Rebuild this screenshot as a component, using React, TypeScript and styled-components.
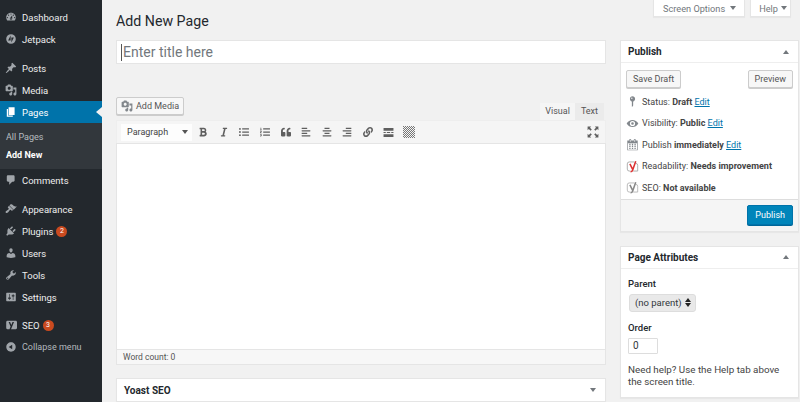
import React from 'react'
import styled, {createGlobalStyle} from 'styled-components'
import {
  FaBold,
  FaItalic,
  FaListUl,
  FaListOl,
  FaQuoteLeft,
  FaAlignLeft,
  FaAlignCenter,
  FaAlignRight,
  FaLink,
} from 'react-icons/fa'

const icons = {
  dashboard:
    'M3.76 16h12.48c1.1-1.37 1.76-3.11 1.76-5 0-4.42-3.58-8-8-8s-8 3.58-8 8c0 1.89.66 3.63 1.76 5zM10 4c.55 0 1 .45 1 1s-.45 1-1 1-1-.45-1-1 .45-1 1-1zM6 6c.55 0 1 .45 1 1s-.45 1-1 1-1-.45-1-1 .45-1 1-1zm8 0c.55 0 1 .45 1 1s-.45 1-1 1-1-.45-1-1 .45-1 1-1zm-5.37 5.55L12 7v6c0 1.1-.9 2-2 2s-2-.9-2-2c0-.57.24-1.08.63-1.45zM4 10c.55 0 1 .45 1 1s-.45 1-1 1-1-.45-1-1 .45-1 1-1zm12 0c.55 0 1 .45 1 1s-.45 1-1 1-1-.45-1-1 .45-1 1-1zm-5 3c0-.55-.45-1-1-1s-1 .45-1 1 .45 1 1 1 1-.45 1-1z',
  jetpack:
    'M10 2a8 8 0 1 0 0 16 8 8 0 0 0 0-16zM9.4 4v8.6H5.2L9.4 4zm1.2 12v-8.6h4.2L10.6 16z',
  pin: 'M10.44 3.02l1.82-1.82 6.36 6.35-1.83 1.82c-1.05-.68-2.48-.57-3.41.36l-.75.75c-.92.93-1.04 2.35-.35 3.41l-1.83 1.82-2.41-2.41-2.8 2.79c-.42.42-3.38 2.71-3.8 2.29s1.86-3.39 2.28-3.81l2.79-2.79L4.1 9.36l1.83-1.82c1.05.69 2.48.57 3.4-.36l.75-.75c.93-.92 1.05-2.35.36-3.41z',
  media:
    'M13 11V4c0-.55-.45-1-1-1h-1.67L9 1H5L3.67 3H2c-.55 0-1 .45-1 1v7c0 .55.45 1 1 1h10c.55 0 1-.45 1-1zM7 4.5c1.38 0 2.5 1.12 2.5 2.5S8.38 9.5 7 9.5 4.5 8.38 4.5 7 5.62 4.5 7 4.5zM14 6h5v10.5c0 1.38-1.12 2.5-2.5 2.5S14 17.88 14 16.5s1.12-2.5 2.5-2.5c.17 0 .34.02.5.05V9h-3V6zm-4 8.05V13h2v3.5c0 1.38-1.12 2.5-2.5 2.5S7 17.88 7 16.5 8.12 14 9.5 14c.17 0 .34.02.5.05z',
  pages: 'M6 15V2h10v13H6zm-1 1h8v2H3V5h2v11z',
  comments:
    'M5 2h9c1.1 0 2 .9 2 2v7c0 1.1-.9 2-2 2h-2l-5 5v-5H5c-1.1 0-2-.9-2-2V4c0-1.1.9-2 2-2z',
  appearance:
    'M14.48 11.06L7.41 3.99l1.5-1.5c.5-.56 2.3-.47 3.51.32 1.21.8 1.43 1.28 2.91 2.1 1.18.64 2.45 1.26 4.45.85zm-.71.71L6.7 4.7 4.93 6.47c-.39.39-.39 1.02 0 1.41l1.06 1.06c.39.39.39 1.03 0 1.42-.6.6-1.43 1.11-2.21 1.69-.35.26-.7.53-1.01.84C1.43 13.23.4 15.13 1.4 16.13c1 1 3.01.06 4.35-1.28.31-.31.58-.66.84-1.01.58-.78 1.09-1.61 1.69-2.21.39-.39 1.03-.39 1.42 0l1.06 1.06c.39.39 1.02.39 1.41 0z',
  plugins:
    'M13.11 4.36L9.87 7.6 8 5.73l3.24-3.24c.35-.34 1.05-.2 1.56.32.52.51.66 1.21.31 1.55zm-8 1.77l.91-1.12 9.01 9.01-1.19.84c-.71.71-2.63 1.16-3.82 1.16H6.14L4.9 17.26c-.59.59-1.54.59-2.12 0-.59-.58-.59-1.53 0-2.12l1.24-1.24v-3.88c0-1.13.4-3.19 1.09-3.89zm7.26 3.97l3.24-3.24c.34-.35 1.04-.21 1.55.31.52.51.66 1.21.31 1.55l-3.24 3.25z',
  users:
    'M10 9.25c-2.27 0-2.73-3.44-2.73-3.44C7 4.02 7.82 2 9.97 2c2.16 0 2.98 2.02 2.71 3.81 0 0-.41 3.44-2.68 3.44zm0 2.57L12.72 10c2.39 0 4.52 2.33 4.52 4.53v2.49s-3.65 1.13-7.24 1.13c-3.65 0-7.24-1.13-7.24-1.13v-2.49c0-2.25 1.94-4.48 4.47-4.48z',
  tools:
    'M16.68 9.77c-1.34 1.34-3.3 1.67-4.95.99l-5.41 6.52c-.99.99-2.59.99-3.58 0s-.99-2.59 0-3.57l6.52-5.42c-.68-1.65-.35-3.61.99-4.95 1.28-1.28 3.12-1.62 4.72-1.06l-2.89 2.89 2.82 2.82 2.86-2.87c.53 1.58.18 3.39-1.08 4.65zM3.81 16.21c.4.39 1.04.39 1.43 0 .4-.4.4-1.04 0-1.43-.39-.4-1.03-.4-1.43 0-.39.39-.39 1.03 0 1.43z',
  settings:
    'M18 16V4c0-.55-.45-1-1-1H3c-.55 0-1 .45-1 1v12c0 .55.45 1 1 1h14c.55 0 1-.45 1-1zM8 11h1c.55 0 1 .45 1 1s-.45 1-1 1H8v1.5c0 .28-.22.5-.5.5s-.5-.22-.5-.5V13H6c-.55 0-1-.45-1-1s.45-1 1-1h1V5.5c0-.28.22-.5.5-.5s.5.22.5.5V11zm5-2h-1c-.55 0-1-.45-1-1s.45-1 1-1h1V5.5c0-.28.22-.5.5-.5s.5.22.5.5V7h1c.55 0 1 .45 1 1s-.45 1-1 1h-1v5.5c0 .28-.22.5-.5.5s-.5-.22-.5-.5V9z',
  yoast:
    'M4 3h14c1 0 2 1 2 2v10c0 1-1 2-2 2H4c-1 0-2-1-2-2V5c0-1 1-2 2-2zM6 5l3.300 7.500L7.500 17h2.600L15 5h-2.500l-2 5-2-5z',
  collapse:
    'M10 2.16c4.33 0 7.84 3.51 7.84 7.84s-3.51 7.84-7.84 7.84S2.16 14.33 2.16 10 5.71 2.16 10 2.16zm2 11.72V6.12L6.18 9.97z',
  status:
    'M14 6c0 1.86-1.28 3.41-3 3.86V16c0 1-2 2-2 2V9.86c-1.72-.45-3-2-3-3.86 0-2.21 1.79-4 4-4s4 1.79 4 4zM8 5c0 .55.45 1 1 1s1-.45 1-1-.45-1-1-1-1 .45-1 1z',
  eye: 'M1 10c2-3.600 5.400-5.500 9-5.500s7 1.900 9 5.500c-2 3.600-5.400 5.500-9 5.500S3 13.600 1 10zm9-4a4 4 0 1 0 0 8 4 4 0 0 0 0-8zm0 2a2 2 0 1 1 0 4 2 2 0 0 1 0-4z',
  calendar:
    'M15 4h3v15H2V4h3V3c0-.41.15-.76.44-1.06.29-.29.65-.44 1.06-.44s.77.15 1.06.44c.29.3.44.65.44 1.06v1h4V3c0-.41.15-.76.44-1.06.29-.29.65-.44 1.06-.44s.77.15 1.06.44c.29.3.44.65.44 1.06v1zM6 3v2.500c0 .14.05.26.15.36.09.09.21.14.35.14s.26-.05.35-.14c.1-.1.15-.22.15-.36V3c0-.14-.05-.26-.15-.36-.09-.09-.21-.14-.35-.14s-.26.05-.35.14c-.1.1-.15.22-.15.36zm7 0v2.500c0 .14.05.26.14.36.1.09.22.14.36.14s.26-.05.36-.14c.09-.1.14-.22.14-.36V3c0-.14-.05-.26-.14-.36-.1-.09-.22-.14-.36-.14s-.26.05-.36.14c-.09.1-.14.22-.14.36zm4 15V8H3v10h14zM7 9v2H5V9h2zm2 0h2v2H9V9zm4 2V9h2v2h-2zm-6 1v2H5v-2h2zm2 0h2v2H9v-2zm4 2v-2h2v2h-2zm-6 1v2H5v-2h2zm4 2H9v-2h2v2zm4 0h-2v-2h2v2z',
}

const FONT = `Roboto, 'Liberation Sans', Arial, sans-serif`

const Global = createGlobalStyle`
  html, body {
    margin: 0;
    height: 402px;
    overflow: hidden;
    background: #f1f1f1;
    font-family: ${FONT};
  }
  * { box-sizing: border-box; }
`

const Page = styled.div`
  display: flex;
  width: 800px;
  height: 402px;
  overflow: hidden;
`

/* admin menu */
const Sidebar = styled.nav`
  width: 102px;
  flex: none;
  background: #23282d;
  padding-top: 6px;
`
const MenuGroup = styled.div`
  margin-bottom: ${(p: {$gap?: number}) => p.$gap ?? 0}px;
`
const MenuItem = styled.div<{$active?: boolean; $muted?: boolean}>`
  position: relative;
  display: flex;
  align-items: center;
  height: 22px;
  padding-left: 5px;
  gap: 5px;
  font-size: ${(p) => (p.$muted ? 9 : 9.5)}px;
  color: ${(p) => (p.$active ? '#fff' : p.$muted ? '#b4b9be' : '#eee')};
  background: ${(p) => (p.$active ? '#0073aa' : 'transparent')};
`
const MenuArrow = styled.span`
  position: absolute;
  right: 0;
  top: 6px;
  border: 5px solid transparent;
  border-right: 6px solid #f1f1f1;
  border-left: 0;
`
const SubMenu = styled.div`
  background: #32373c;
  padding: 5px 0;
`
const SubItem = styled.div<{$current?: boolean}>`
  height: 18px;
  line-height: 18px;
  padding-left: 6px;
  font-size: 9px;
  color: ${(p) => (p.$current ? '#fff' : 'rgba(240,245,250,.7)')};
  font-weight: ${(p) => (p.$current ? 700 : 400)};
`
const Badge = styled.span`
  width: 11px;
  height: 11px;
  border-radius: 50%;
  margin-left: -2px;
  background: #ca4a1f;
  color: #fff;
  font-size: 7px;
  line-height: 11px;
  text-align: center;
`
const DashSvg = styled.svg<{$size: number; $color: string}>`
  width: ${(p) => p.$size}px;
  height: ${(p) => p.$size}px;
  flex: none;
  fill: ${(p) => p.$color};
`
const Dash = ({name, size = 12, color = '#a0a5aa'}: {name: keyof typeof icons; size?: number; color?: string}) => (
  <DashSvg viewBox="0 0 20 20" $size={size} $color={color}>
    <path fillRule="evenodd" d={icons[name]} />
  </DashSvg>
)

/* main area */
const Main = styled.main`
  flex: 1;
  min-width: 0;
  padding-left: 14px;
`
const TopBar = styled.header`
  display: flex;
  justify-content: space-between;
  align-items: flex-start;
  height: 40px;
  padding-right: 9px;
`
const Title = styled.h1`
  margin: 12px 0 0;
  font-size: 14.2px;
  line-height: 18px;
  font-weight: 400;
  color: #23282d;
`
const ScreenTabs = styled.div`
  display: flex;
  gap: 5px;
`
const ScreenTab = styled.div<{$compact?: boolean}>`
  display: flex;
  align-items: center;
  gap: ${(p) => (p.$compact ? 3 : 5)}px;
  height: 17px;
  padding: ${(p) => (p.$compact ? '0 3px 0 8px' : '0 8px 0 9px')};
  background: #fff;
  border: 1px solid #e5e5e5;
  border-top: 0;
  box-shadow: 0 1px 1px rgba(0, 0, 0, 0.04);
  font-size: 9.2px;
  color: #72777c;
`
const Caret = styled.span<{$dir?: 'up' | 'down'; $color?: string}>`
  width: 0;
  height: 0;
  border-left: 3px solid transparent;
  border-right: 3px solid transparent;
  ${(p) => (p.$dir === 'up' ? 'border-bottom' : 'border-top')}: 4px solid ${(p) => p.$color ?? '#72777c'};
`
const Columns = styled.div`
  display: grid;
  grid-template-columns: 490px 179px;
  column-gap: 14px;
  align-items: start;
`
const TitleField = styled.div`
  display: flex;
  align-items: center;
  height: 24px;
  padding-left: 4px;
  background: #fff;
  border: 1px solid #e5e5e5;
  font-size: 14px;
  color: #72777c;
`
const TextCursor = styled.span`
  width: 1px;
  height: 17px;
  margin-right: 1px;
  background: #555;
`
const EditorTools = styled.div`
  display: flex;
  justify-content: space-between;
  align-items: flex-end;
  margin-top: 33px;
  height: 23px;
  padding-right: 2px;
`
const Button = styled.div<{$primary?: boolean}>`
  display: inline-flex;
  align-items: center;
  gap: 4px;
  height: ${(p) => (p.$primary ? 20 : 18)}px;
  padding: 0 ${(p) => (p.$primary ? 7 : 6)}px;
  font-size: 9px;
  border-radius: 2px;
  border: 1px solid ${(p) => (p.$primary ? '#0073aa' : '#ccc')};
  background: ${(p) => (p.$primary ? '#0085ba' : '#f7f7f7')};
  color: ${(p) => (p.$primary ? '#fff' : '#555')};
  box-shadow: 0 1px 0 ${(p) => (p.$primary ? '#006799' : '#ccc')};
`
const AddMedia = styled(Button)`
  gap: 3px;
  padding: 0 4px;
  margin-bottom: 5px;
`
const ModeTabs = styled.div`
  display: flex;
`
const ModeTab = styled.div<{$active?: boolean}>`
  height: 17px;
  line-height: 17px;
  padding: 0 ${(p) => (p.$active ? 5 : 6)}px;
  font-size: 9px;
  color: #555;
  background: ${(p) => (p.$active ? '#f5f5f5' : '#ebebeb')};
`
const Toolbar = styled.div`
  display: flex;
  align-items: center;
  height: 23px;
  padding: 0 2px 0 4px;
  background: #f5f5f5;
  border: 1px solid #eee;
  border-bottom: 0;
`
const FormatSelect = styled.div`
  display: flex;
  align-items: center;
  justify-content: space-between;
  width: 71px;
  height: 17px;
  padding: 0 4px 0 6px;
  background: #fdfdfd;
  font-size: 9px;
  color: #444;
`
const ToolIcons = styled.div`
  display: flex;
  flex: 1;
  align-items: center;
  padding-left: 1px;
`
const ToolIcon = styled.span<{$end?: boolean}>`
  display: flex;
  align-items: center;
  justify-content: center;
  width: 20.6px;
  height: 20px;
  font-size: 10px;
  color: #5f5f5f;
  margin-left: ${(p) => (p.$end ? 'auto' : 0)};
`
const EditorBody = styled.div`
  height: 206px;
  background: #fff;
  border-left: 1px solid #e5e5e5;
  border-right: 1px solid #e5e5e5;
  border-top: 1px solid #e5e5e5;
`
const StatusBar = styled.div`
  height: 16px;
  line-height: 15px;
  padding-left: 6px;
  background: #f7f7f7;
  border: 1px solid #e5e5e5;
  font-size: 8.5px;
  color: #555;
`
const Postbox = styled.section<{$top?: number}>`
  margin-top: ${(p) => p.$top ?? 0}px;
  background: #fff;
  border: 1px solid #e5e5e5;
  box-shadow: 0 1px 1px rgba(0, 0, 0, 0.04);
`
const BoxHeader = styled.div<{$plain?: boolean}>`
  display: flex;
  align-items: center;
  justify-content: space-between;
  height: 22px;
  padding: 0 9px 0 7px;
  border-bottom: ${(p) => (p.$plain ? '0' : '1px solid #eee')};
  font-size: 10px;
  font-weight: 700;
  color: #23282d;
`
const Actions = styled.div`
  display: flex;
  justify-content: space-between;
  padding: 7px 5px 3px 5px;
`
const MetaRow = styled.div`
  display: flex;
  align-items: center;
  gap: 3px;
  height: 21.5px;
  padding-left: 5px;
  font-size: 9px;
  color: #444;
  b {
    font-weight: 700;
  }
`
const Link = styled.span`
  color: #0073aa;
  text-decoration: underline;
`
const BoxFooter = styled.div`
  display: flex;
  justify-content: flex-end;
  padding: 5px 5px 6px;
  background: #f5f5f5;
  border-top: 1px solid #ddd;
`
const BoxBody = styled.div`
  padding: 9px 7px 9px;
  font-size: 9.8px;
  color: #444;
`
const FieldLabel = styled.div`
  height: 12px;
  line-height: 12px;
  font-size: 9.5px;
  font-weight: 500;
  color: #23282d;
`
const ParentSelect = styled.div`
  display: flex;
  align-items: center;
  justify-content: space-between;
  width: 67px;
  height: 18px;
  margin: 4px 0 10px 1px;
  padding: 0 4px 0 5px;
  background: #e9e9e9;
  border: 1px solid #ddd;
  border-radius: 3px;
  font-size: 9.5px;
  color: #32373c;
`
const Stepper = styled.span`
  display: flex;
  flex-direction: column;
  gap: 1px;
`
const OrderInput = styled.div`
  width: 30px;
  height: 16px;
  margin: 4px 0 10px;
  line-height: 14px;
  padding-left: 4px;
  background: #fff;
  border: 1px solid #ddd;
  border-radius: 1px;
  font-size: 10px;
  color: #32373c;
`
const Help = styled.p`
  margin: 0;
  font-size: 9.8px;
  line-height: 12px;
  color: #444;
`
const MoreBreak = () => (
  <svg width="11" height="11" viewBox="0 0 20 20" fill="currentColor">
    <path d="M1 2h18v5H1zM1 13h18v5H1zM1 9.300h4v1.400H1zM7 9.300h6v1.400H7zM15 9.300h4v1.400h-4z" />
  </svg>
)
const KitchenSink = () => (
  <svg width="12" height="12" viewBox="0 0 12 12" fill="#777">
    {Array.from({length: 144}).map((_, i) =>
      ((i % 12) + Math.floor(i / 12)) % 2 === 0 ? (
        <rect key={i} x={i % 12} y={Math.floor(i / 12)} width="1" height="1" />
      ) : null
    )}
  </svg>
)
const FullScreen = () => (
  <svg width="12" height="12" viewBox="0 0 20 20" fill="currentColor">
    <path d="M1 1h6L5 3l3 3-2 2-3-3-2 2zM19 1v6l-2-2-3 3-2-2 3-3-2-2zM19 19h-6l2-2-3-3 2-2 3 3 2-2zM1 19v-6l2 2 3-3 2 2-3 3 2 2z" />
  </svg>
)
const YoastMark = ({color, outline}: {color: string; outline: string}) => (
  <svg width="13" height="13" viewBox="0 0 20 20" fill="none">
    <path d="M13 3H5Q2 3 2 6v8q0 3 3 3h2M15 5q3 .5 3 3v9h-7" stroke={outline} strokeWidth="1.200" />
    <path d="M6 6l4 8M15 2l-5 14q-.7 2-3 2" stroke={color} strokeWidth="2.400" />
  </svg>
)

type MenuEntry = {name: keyof typeof icons; label: string; badge?: string; muted?: boolean}

const menuTop: MenuEntry[][] = [
  [
    {name: 'dashboard', label: 'Dashboard'},
    {name: 'jetpack', label: 'Jetpack'},
  ],
  [
    {name: 'pin', label: 'Posts'},
    {name: 'media', label: 'Media'},
  ],
]
const menuAfterPages: MenuEntry[][] = [
  [{name: 'comments', label: 'Comments'}],
  [
    {name: 'appearance', label: 'Appearance'},
    {name: 'plugins', label: 'Plugins', badge: '2'},
    {name: 'users', label: 'Users'},
    {name: 'tools', label: 'Tools'},
    {name: 'settings', label: 'Settings'},
  ],
  [
    {name: 'yoast', label: 'SEO', badge: '3'},
    {name: 'collapse', label: 'Collapse menu', muted: true},
  ],
]

const App = () => (
  <Page>
    <Global />
    <Sidebar>
      <MenuGroup $gap={7}>
        {menuTop[0].map((m) => (
          <MenuItem key={m.label}>
            <Dash name={m.name} />
            {m.label}
          </MenuItem>
        ))}
      </MenuGroup>
      {menuTop[1].map((m) => (
        <MenuItem key={m.label}>
          <Dash name={m.name} />
          {m.label}
        </MenuItem>
      ))}
      <MenuItem $active>
        <Dash name="pages" color="#fff" />
        Pages
        <MenuArrow />
      </MenuItem>
      <SubMenu>
        <SubItem>All Pages</SubItem>
        <SubItem $current>Add New</SubItem>
      </SubMenu>
      {menuAfterPages.map((group, i) => (
        <MenuGroup key={i} $gap={i === 0 ? 7 : 6}>
          {group.map((m) => (
            <MenuItem key={m.label} $muted={m.muted}>
              <Dash name={m.name} />
              {m.label}
              {m.badge && <Badge>{m.badge}</Badge>}
            </MenuItem>
          ))}
        </MenuGroup>
      ))}
    </Sidebar>

    <Main>
      <TopBar>
        <Title>Add New Page</Title>
        <ScreenTabs>
          <ScreenTab>
            Screen Options <Caret />
          </ScreenTab>
          <ScreenTab $compact>
            Help <Caret />
          </ScreenTab>
        </ScreenTabs>
      </TopBar>
      <Columns>
        <div>
          <TitleField>
            <TextCursor />
            Enter title here
          </TitleField>
          <EditorTools>
            <AddMedia>
              <Dash name="media" color="#82878c" size={12} />
              Add Media
            </AddMedia>
            <ModeTabs>
              <ModeTab $active>Visual</ModeTab>
              <ModeTab>Text</ModeTab>
            </ModeTabs>
          </EditorTools>
          <Toolbar>
            <FormatSelect>
              Paragraph <Caret $color="#555" />
            </FormatSelect>
            <ToolIcons>
              <ToolIcon><FaBold /></ToolIcon>
              <ToolIcon><FaItalic /></ToolIcon>
              <ToolIcon><FaListUl /></ToolIcon>
              <ToolIcon><FaListOl /></ToolIcon>
              <ToolIcon><FaQuoteLeft /></ToolIcon>
              <ToolIcon><FaAlignLeft /></ToolIcon>
              <ToolIcon><FaAlignCenter /></ToolIcon>
              <ToolIcon><FaAlignRight /></ToolIcon>
              <ToolIcon><FaLink /></ToolIcon>
              <ToolIcon><MoreBreak /></ToolIcon>
              <ToolIcon><KitchenSink /></ToolIcon>
              <ToolIcon $end><FullScreen /></ToolIcon>
            </ToolIcons>
          </Toolbar>
          <EditorBody />
          <StatusBar>Word count: 0</StatusBar>
          <Postbox $top={13}>
            <BoxHeader $plain>
              Yoast SEO
              <Caret />
            </BoxHeader>
          </Postbox>
        </div>

        <div>
          <Postbox>
            <BoxHeader>
              Publish
              <Caret $dir="up" />
            </BoxHeader>
            <Actions>
              <Button>Save Draft</Button>
              <Button>Preview</Button>
            </Actions>
            <MetaRow>
              <Dash name="status" size={13} color="#82878c" />
              <span>Status: <b>Draft</b> <Link>Edit</Link></span>
            </MetaRow>
            <MetaRow>
              <Dash name="eye" size={13} color="#82878c" />
              <span>Visibility: <b>Public</b> <Link>Edit</Link></span>
            </MetaRow>
            <MetaRow>
              <Dash name="calendar" size={13} color="#82878c" />
              <span>Publish <b>immediately</b> <Link>Edit</Link></span>
            </MetaRow>
            <MetaRow>
              <YoastMark color="#dc3232" outline="#999" />
              <span>Readability: <b>Needs improvement</b></span>
            </MetaRow>
            <MetaRow>
              <YoastMark color="#888" outline="#aaa" />
              <span>SEO: <b>Not available</b></span>
            </MetaRow>
            <BoxFooter>
              <Button $primary>Publish</Button>
            </BoxFooter>
          </Postbox>
          <Postbox $top={14}>
            <BoxHeader>
              Page Attributes
              <Caret $dir="up" />
            </BoxHeader>
            <BoxBody>
              <FieldLabel>Parent</FieldLabel>
              <ParentSelect>
                (no parent)
                <Stepper>
                  <Caret $dir="up" $color="#222" />
                  <Caret $color="#222" />
                </Stepper>
              </ParentSelect>
              <FieldLabel>Order</FieldLabel>
              <OrderInput>0</OrderInput>
              <Help>Need help? Use the Help tab above the screen title.</Help>
            </BoxBody>
          </Postbox>
        </div>
      </Columns>
    </Main>
  </Page>
)

export default App
